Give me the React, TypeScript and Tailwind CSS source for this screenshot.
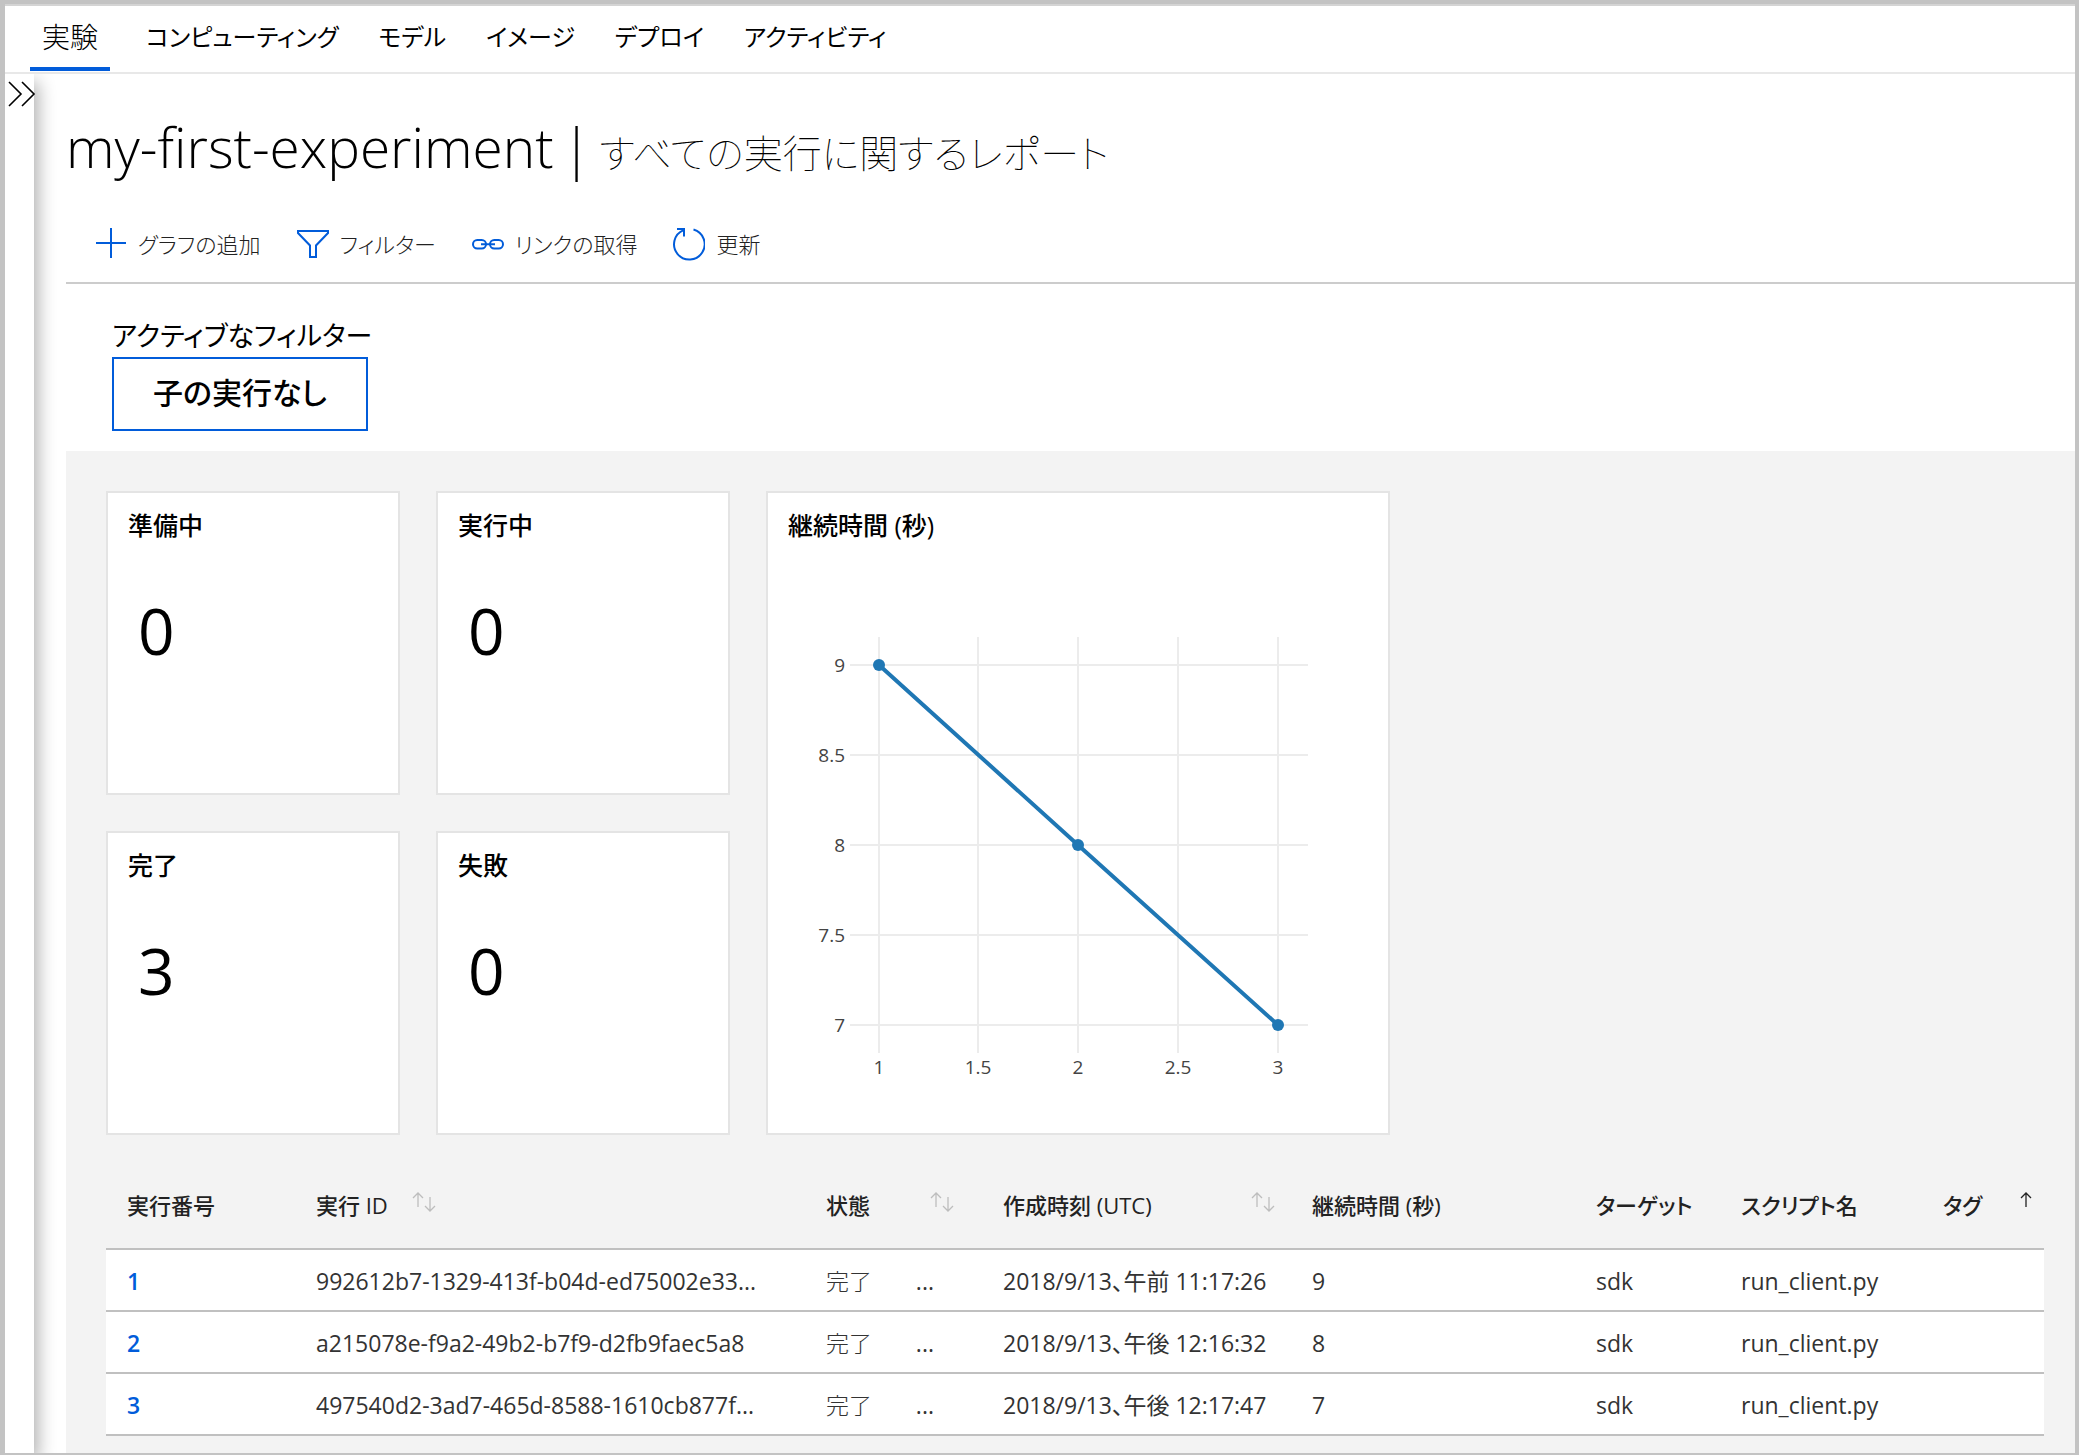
import React from "react";

const tabs = ["コンピューティング", "モデル", "イメージ", "デプロイ", "アクティビティ"];

const stats = [
  { label: "準備中", value: 0 },
  { label: "実行中", value: 0 },
  { label: "完了", value: 3 },
  { label: "失敗", value: 0 },
];

const runs = [
  { no: 1, id: "992612b7-1329-413f-b04d-ed75002e33...", created: "2018/9/13、午前 11:17:26", duration: 9 },
  { no: 2, id: "a215078e-f9a2-49b2-b7f9-d2fb9faec5a8", created: "2018/9/13、午後 12:16:32", duration: 8 },
  { no: 3, id: "497540d2-3ad7-465d-8588-1610cb877f...", created: "2018/9/13、午後 12:17:47", duration: 7 },
];

function PlusIcon() {
  return (
    <svg className="h-8 w-8" viewBox="0 0 32 32" fill="none" stroke="#015cda" strokeWidth="2" aria-hidden="true">
      <path d="M16 0v30M1 15h30" />
    </svg>
  );
}

function FunnelIcon() {
  return (
    <svg className="h-8 w-8" viewBox="0 0 32 32" fill="none" stroke="#015cda" strokeWidth="2" aria-hidden="true">
      <path d="M1 3h30v2L19 17.500V29h-6V17.500L1 5z" />
    </svg>
  );
}

function LinkIcon() {
  return (
    <svg className="h-8 w-8" viewBox="0 0 32 32" fill="none" stroke="#015cda" strokeWidth="2" aria-hidden="true">
      <rect x="1" y="12" width="13" height="8.500" rx="4.250" />
      <rect x="18" y="12" width="13" height="8.500" rx="4.250" />
      <path d="M9 16.250h14" />
    </svg>
  );
}

function RefreshIcon() {
  return (
    <svg className="h-9 w-8" viewBox="0 0 32 36" fill="none" stroke="#015cda" strokeWidth="2" aria-hidden="true">
      <path d="M20.500 3.500A15.300 15.300 0 1 1 10.500 4.100" />
      <path d="M4 3h7v7.500" />
    </svg>
  );
}

function SortIcon() {
  return (
    <svg className="mb-2 h-5 w-6 shrink-0" viewBox="0 0 24 20" fill="none" stroke="#bdbdbd" strokeWidth="1.300" aria-hidden="true">
      <path d="M6 15V1M1 6l5-5 5 5M18 5v14M13 14l5 5 5-5" />
    </svg>
  );
}

function UpIcon() {
  return (
    <svg className="mb-2 h-5 w-3 shrink-0" viewBox="0 0 12 20" fill="none" stroke="#222" strokeWidth="1.300" aria-hidden="true">
      <path d="M6 15V1M1 6l5-5 5 5" />
    </svg>
  );
}

const tools = [
  { label: "グラフの追加", Icon: PlusIcon },
  { label: "フィルター", Icon: FunnelIcon },
  { label: "リンクの取得", Icon: LinkIcon },
  { label: "更新", Icon: RefreshIcon },
];

const xTicks = [
  { label: "1", x: 111 },
  { label: "1.5", x: 210 },
  { label: "2", x: 310 },
  { label: "2.5", x: 410 },
  { label: "3", x: 510 },
];
const yTicks = [
  { label: "9", y: 38 },
  { label: "8.5", y: 128 },
  { label: "8", y: 218 },
  { label: "7.5", y: 308 },
  { label: "7", y: 398 },
];
const points = [
  [111, 38],
  [310, 218],
  [510, 398],
];

function DurationChart() {
  return (
    <svg className="w-full" viewBox="0 0 620 460" role="img" aria-label="継続時間 (秒)">
      <g stroke="#ececec" strokeWidth="2">
        {xTicks.map((t) => (
          <line key={t.label} x1={t.x} x2={t.x} y1="10" y2="426" />
        ))}
        {yTicks.map((t) => (
          <line key={t.label} x1="82" x2="540" y1={t.y} y2={t.y} />
        ))}
      </g>
      <g fill="#444" fontSize="19">
        {xTicks.map((t) => (
          <text key={t.label} x={t.x} y="447" textAnchor="middle">
            {t.label}
          </text>
        ))}
        {yTicks.map((t) => (
          <text key={t.label} x="77" y={t.y + 7} textAnchor="end">
            {t.label}
          </text>
        ))}
      </g>
      <polyline points={points.map((p) => p.join(",")).join(" ")} fill="none" stroke="#1f77b4" strokeWidth="4" />
      {points.map(([x, y]) => (
        <circle key={x} cx={x} cy={y} r="6" fill="#1f77b4" />
      ))}
    </svg>
  );
}

export default function App() {
  return (
    <div className="flex min-h-screen flex-col border-t-4 border-r-4 border-b-2 border-l-5 border-[#c3c3c3] bg-white font-['Open_Sans','Noto_Sans_CJK_JP',sans-serif] text-black [font-feature-settings:'palt']">
      <header className="border-t-2 border-b-2 border-t-[#d4d4d4] border-b-[#e8e8e8]">
        <nav className="flex h-[66px] items-stretch pb-px pl-[25px]">
          <a
            href="#"
            aria-current="page"
            className="mr-7 flex items-center border-b-4 border-[#015cda] px-3 pt-px text-[28px] font-light"
          >
            実験
          </a>
          <div className="flex items-center gap-6 pb-[3px] text-2xl">
            {tabs.map((t) => (
              <a key={t} href="#" className="px-2">
                {t}
              </a>
            ))}
          </div>
        </nav>
      </header>

      <div className="flex flex-1 overflow-hidden">
        <aside className="relative z-10 w-[29px] shrink-0 bg-white shadow-[4px_8px_18px_rgba(0,0,0,0.32)]">
          <button type="button" aria-label="展開" className="mt-[6px] ml-[3px] block">
            <svg className="h-[28px] w-[28px]" viewBox="0 0 28 28" fill="none" stroke="#000" strokeWidth="1.600" aria-hidden="true">
              <path d="M1 2l12 12L1 26M14 2l12 12-12 12" />
            </svg>
          </button>
        </aside>

        <main className="ml-8 flex min-w-0 flex-1 flex-col">
          <h1 className="flex h-[132px] items-baseline pt-[33px] text-[55px] leading-[80px] font-light">
            <span>my-first-experiment</span>
            <span className="px-2">|</span>
            <span className="text-[39px] font-thin">すべての実行に関するレポート</span>
          </h1>

          <div className="flex h-[78px] items-center gap-9 border-b-2 border-[#ccc] pl-[29px] text-[22px] font-light text-[#222]">
            {tools.map(({ label, Icon }) => (
              <button key={label} type="button" className="flex items-center gap-[11px]">
                <Icon />
                {label}
              </button>
            ))}
          </div>

          <section className="flex flex-col items-start px-[46px] pt-[33px] pb-5">
            <h2 className="pb-[2px] text-[27px] leading-[38px]">アクティブなフィルター</h2>
            <button type="button" className="h-[74px] border-2 border-[#015cda] px-[39px] pb-1 text-[30px] font-medium">
              子の実行なし
            </button>
          </section>

          <div className="flex-1 bg-[#f3f3f3] pt-10 pr-[31px] pl-10">
            <div className="grid grid-cols-[repeat(4,294px)] grid-rows-[304px_304px] gap-9">
              {stats.map((s, i) => (
                <section
                  key={s.label}
                  className={
                    i % 2 === 0
                      ? "col-start-1 border-2 border-[#e4e4e4] bg-white px-5 pt-[15px]"
                      : "col-start-2 border-2 border-[#e4e4e4] bg-white px-5 pt-[15px]"
                  }
                >
                  <h3 className="text-[25px] leading-[34px] font-medium [font-feature-settings:normal]">{s.label}</h3>
                  <p className="pt-[46px] pl-[10px] text-[64px] leading-[86px]">{s.value}</p>
                </section>
              ))}
              <section className="col-span-2 col-start-3 row-span-2 row-start-1 border-2 border-[#e4e4e4] bg-white pt-[15px]">
                <h3 className="px-5 pb-[85px] text-[25px] leading-[34px] font-medium [font-feature-settings:normal]">
                  継続時間 (秒)
                </h3>
                <DurationChart />
              </section>
            </div>

            <table className="mt-[26px] w-full table-fixed border-collapse text-left text-[23px] text-[#333]">
              <colgroup>
                <col className="w-[189px]" />
                <col />
                <col className="w-[177px]" />
                <col className="w-[309px]" />
                <col className="w-[284px]" />
                <col className="w-[145px]" />
                <col className="w-[202px]" />
                <col className="w-[122px]" />
              </colgroup>
              <thead>
                <tr className="h-[88px] border-b-2 border-[#c0c0c0] text-[22px] text-[#222] [&>th]:pt-[2px] [&>th]:pl-[21px] [&>th]:font-medium">
                  <th>実行番号</th>
                  <th>
                    <span className="flex items-center gap-6">
                      実行 ID <SortIcon />
                    </span>
                  </th>
                  <th>
                    <span className="flex items-center justify-between pr-7">
                      状態 <SortIcon />
                    </span>
                  </th>
                  <th>
                    <span className="flex items-center justify-between pr-4">
                      作成時刻 (UTC) <SortIcon />
                    </span>
                  </th>
                  <th>継続時間 (秒)</th>
                  <th>ターゲット</th>
                  <th>スクリプト名</th>
                  <th>
                    <span className="flex items-center justify-between pr-3">
                      タグ <UpIcon />
                    </span>
                  </th>
                </tr>
              </thead>
              <tbody>
                {runs.map((r) => (
                  <tr
                    key={r.no}
                    className="h-[62px] border-b-2 border-[#c0c0c0] bg-white whitespace-nowrap [&>td]:pt-[2px] [&>td]:pl-[21px]"
                  >
                    <td>
                      <a href="#" className="font-semibold text-[#015cda]">
                        {r.no}
                      </a>
                    </td>
                    <td>{r.id}</td>
                    <td>
                      <span className="flex justify-between pr-12">
                        <span className="font-light">完了</span>
                        <span>...</span>
                      </span>
                    </td>
                    <td>{r.created}</td>
                    <td>{r.duration}</td>
                    <td>sdk</td>
                    <td>run_client.py</td>
                    <td />
                  </tr>
                ))}
              </tbody>
            </table>
          </div>
        </main>
      </div>
    </div>
  );
}
